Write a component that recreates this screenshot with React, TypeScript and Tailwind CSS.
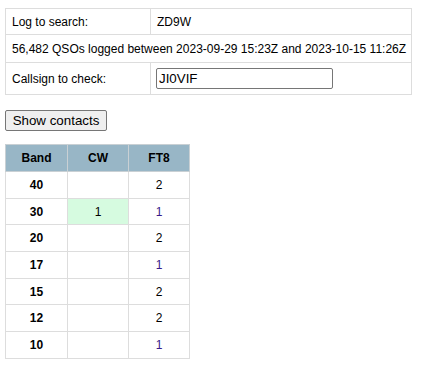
import React from 'react';

const ROWS: { band: string; cw?: number; ft8: number }[] = [
    { band: '40', ft8: 2 },
    { band: '30', cw: 1, ft8: 1 },
    { band: '20', ft8: 2 },
    { band: '17', ft8: 1 },
    { band: '15', ft8: 2 },
    { band: '12', ft8: 2 },
    { band: '10', ft8: 1 },
];

const cell = 'border border-[#dddddd]';
const font = { fontFamily: '"Liberation Sans", Arial, sans-serif' };

const App: React.FC = () => {
    return (
        <div className="min-h-screen bg-white px-[5px] pt-[8px] text-[12px] text-black" style={font}>
            <table className="w-[407px] border-collapse">
                <tbody>
                    <tr className="h-[26px]">
                        <td className={`${cell} w-[145px] pl-[6px]`}>Log to search:</td>
                        <td className={`${cell} pl-[6px]`}>ZD9W</td>
                    </tr>
                    <tr className="h-[28px]">
                        <td colSpan={2} className={`${cell} pl-[6px]`}>
                            56,482 QSOs logged between 2023-09-29 15:23Z and 2023-10-15 11:26Z
                        </td>
                    </tr>
                    <tr className="h-[32px]">
                        <td className={`${cell} pl-[6px]`}>Callsign to check:</td>
                        <td className={`${cell} pl-[5px]`}>
                            <input
                                defaultValue="JI0VIF"
                                className="block h-[21px] w-[177px] rounded-[2px] border border-[#767676] px-[2px] text-[13.333px] outline-none"
                                style={font}
                            />
                        </td>
                    </tr>
                </tbody>
            </table>

            <button
                className="mt-[15px] block h-[21px] w-[102px] rounded-[2px] border border-[#767676] bg-[#efefef] text-[13.333px] leading-none"
                style={font}
            >
                Show contacts
            </button>

            <table className="mt-[13px] w-[185px] border-collapse text-center">
                <thead>
                    <tr className="h-[27px] bg-[#98b6c6] font-bold">
                        <th className="w-[62px] border border-[#c9d0d4]">Band</th>
                        <th className="w-[61px] border border-[#c9d0d4]">CW</th>
                        <th className="border border-[#c9d0d4]">FT8</th>
                    </tr>
                </thead>
                <tbody>
                    {ROWS.map((r) => (
                        <tr key={r.band} className="h-[26.7px]">
                            <td className={`${cell} font-bold`}>{r.band}</td>
                            <td className={`${cell} ${r.cw ? 'bg-[#d6fbe0]' : ''}`}>{r.cw ?? ''}</td>
                            <td className={`${cell} ${r.ft8 === 1 ? 'text-[#3a1a8a]' : ''}`}>{r.ft8}</td>
                        </tr>
                    ))}
                </tbody>
            </table>
        </div>
    );
};

export default App;
